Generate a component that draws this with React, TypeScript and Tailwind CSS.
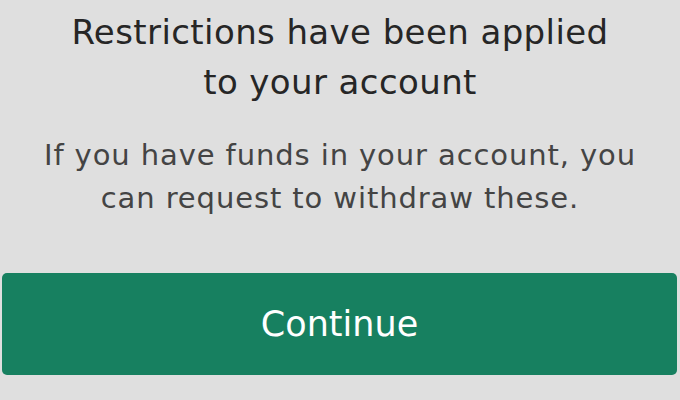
export default function App() {
  return (
    <div className="w-[680px] h-[400px] bg-[#dfdfdf] overflow-hidden font-['DejaVu_Sans',sans-serif]">
      <div className="flex flex-col items-center text-center pt-[7px]">
        <h1 className="text-[34px] leading-[50px] tracking-[0.4px] text-[#262626]">
          Restrictions have been applied
          <br />
          to your account
        </h1>
        <p className="mt-[27px] text-[29px] leading-[43px] tracking-[0.9px] text-[#444444]">
          If you have funds in your account, you
          <br />
          can request to withdraw these.
        </p>
      </div>
      <div className="pl-[2px] pr-[3px] mt-[53px]">
        <button className="w-full h-[102px] rounded-[5px] bg-[#178060] text-white text-[35px] flex items-center justify-center">
          Continue
        </button>
      </div>
    </div>
  );
}
